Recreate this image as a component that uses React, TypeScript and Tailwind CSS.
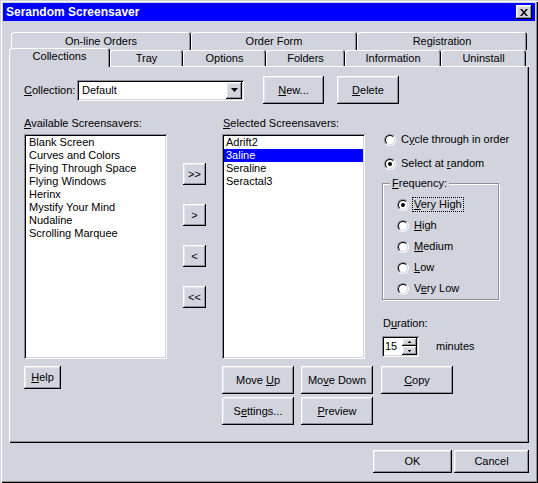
import React from "react"

const raised =
  "bg-[#d1d4dc] shadow-[inset_-1px_-1px_#000,inset_1px_1px_#fff,inset_-2px_-2px_#8e9199,inset_2px_2px_#e3e5ea]"
const sunken =
  "shadow-[inset_1px_1px_#8e9199,inset_-1px_-1px_#fff,inset_2px_2px_#000,inset_-2px_-2px_#d1d4dc]"

function Btn({ children, className = "" }: { children: React.ReactNode; className?: string }) {
  return (
    <button type="button" className={`flex items-center justify-center ${raised} ${className}`}>
      {children}
    </button>
  )
}

function Tab({ children, className = "" }: { children: React.ReactNode; className?: string }) {
  return (
    <div
      className={`flex items-center justify-center rounded-t-[3px] bg-[#d1d4dc] shadow-[inset_1px_1px_#fff,inset_-1px_0_#000,inset_-2px_0_#8e9199] ${className}`}
    >
      {children}
    </div>
  )
}

function Radio({ checked = false }: { checked?: boolean }) {
  return (
    <span className="relative inline-block w-[12px] h-[12px] shrink-0 rounded-full border border-t-[#8e9199] border-l-[#8e9199] border-b-white border-r-white">
      <span className="absolute inset-0 flex items-center justify-center rounded-full bg-white border border-t-black border-l-black border-b-[#d1d4dc] border-r-[#d1d4dc]">
        {checked && <span className="w-[4px] h-[4px] rounded-full bg-black" />}
      </span>
    </span>
  )
}

function RadioRow({ checked, children }: { checked?: boolean; children: React.ReactNode }) {
  return (
    <div className="flex items-center h-[13px] whitespace-nowrap">
      <Radio checked={checked} />
      <span className="ml-[5px]">{children}</span>
    </div>
  )
}

const available = [
  "Blank Screen",
  "Curves and Colors",
  "Flying Through Space",
  "Flying Windows",
  "Herinx",
  "Mystify Your Mind",
  "Nudaline",
  "Scrolling Marquee",
]
const selected = ["Adrift2", "3aline", "Seraline", "Seractal3"]

export default function App() {
  return (
    <div className="w-[538px] h-[483px] flex flex-col bg-[#d1d4dc] shadow-[inset_1px_1px_#d1d4dc,inset_2px_2px_#fff,inset_-1px_-1px_#000,inset_-2px_-2px_#8e9199] font-['Liberation_Sans',Arial,sans-serif] text-[11px] leading-[13px] text-black">
      {/* title bar */}
      <div className="mx-[3px] mt-[3px] h-[18px] flex items-center justify-between pl-[3px] pr-[3px] bg-[#0000ff]">
        <span className="text-white font-bold text-[12px]">Serandom Screensaver</span>
        <button type="button" className={`w-[16px] h-[14px] flex items-center justify-center ${raised}`}>
          <svg width="8" height="7" viewBox="0 0 8 7">
            <path d="M0 0h2l2 2.5L6 0h2L5 3.5 8 7H6L4 4.5 2 7H0l3-3.5z" fill="#000" />
          </svg>
        </button>
      </div>

      {/* tabs */}
      <div className="mt-[11px] flex pl-[11px]">
        <Tab className="w-[180px] h-[18px]">On-line Orders</Tab>
        <Tab className="w-[166px] h-[18px]">Order Form</Tab>
        <Tab className="w-[170px] h-[18px]">Registration</Tab>
      </div>
      <div className="flex items-end pl-[9px] h-[16px]">
        <div className="relative z-10 -mb-[1px] w-[101px] h-[19px] flex items-center justify-center pb-[2px] rounded-t-[3px] bg-[#d1d4dc] shadow-[inset_1px_1px_#fff,inset_-1px_0_#000,inset_-2px_0_#8e9199]">
          Collections
        </div>
        <Tab className="w-[73px] h-[16px]">Tray</Tab>
        <Tab className="w-[83px] h-[16px]">Options</Tab>
        <Tab className="w-[79px] h-[16px]">Folders</Tab>
        <Tab className="w-[96px] h-[16px]">Information</Tab>
        <Tab className="w-[85px] h-[16px]">Uninstall</Tab>
      </div>

      {/* panel */}
      <div className="ml-[9px] w-[520px] h-[377px] shadow-[inset_1px_1px_#fff,inset_-1px_-1px_#000,inset_-2px_-2px_#8e9199]">
        <div className="mt-[10px] pl-[15px] flex items-center h-[28px]">
          <span className="w-[53px]">
            <u>C</u>ollection:
          </span>
          <div className={`w-[167px] h-[21px] bg-white flex items-center justify-between pl-[5px] pr-[2px] ${sunken}`}>
            <span>Default</span>
            <div className={`w-[16px] h-[17px] flex items-center justify-center ${raised}`}>
              <svg width="7" height="4" viewBox="0 0 7 4">
                <path d="M0 0h7L3.5 4z" fill="#000" />
              </svg>
            </div>
          </div>
          <Btn className="ml-[19px] w-[61px] h-[28px]">
            <span>
              <u>N</u>ew...
            </span>
          </Btn>
          <Btn className="ml-[13px] w-[62px] h-[28px]">
            <span>
              <u>D</u>elete
            </span>
          </Btn>
        </div>

        <div className="mt-[13px] pl-[15px] flex">
          {/* available */}
          <div className="w-[143px] flex flex-col">
            <div className="h-[13px] mb-[4px] whitespace-nowrap">
              <u>A</u>vailable Screensavers:
            </div>
            <div className={`h-[225px] bg-white p-[2px] ${sunken}`}>
              {available.map((s) => (
                <div key={s} className="h-[13px] px-[3px] whitespace-nowrap">
                  {s}
                </div>
              ))}
            </div>
            <Btn className="mt-[7px] w-[37px] h-[23px]">
              <span>
                <u>H</u>elp
              </span>
            </Btn>
          </div>

          {/* arrows */}
          <div className="ml-[16px] w-[23px] pt-[46px] flex flex-col gap-[19px]">
            <Btn className="w-[23px] h-[22px]">&gt;&gt;</Btn>
            <Btn className="w-[23px] h-[22px]">&gt;</Btn>
            <Btn className="w-[23px] h-[22px]">&lt;</Btn>
            <Btn className="w-[23px] h-[22px]">&lt;&lt;</Btn>
          </div>

          {/* selected */}
          <div className="ml-[16px] w-[151px] flex flex-col">
            <div className="h-[13px] mb-[4px] pl-[1px] whitespace-nowrap">
              <u>S</u>elected Screensavers:
            </div>
            <div className={`w-[143px] h-[225px] bg-white p-[2px] ${sunken}`}>
              {selected.map((s) => (
                <div
                  key={s}
                  className={`h-[13px] px-[2px] whitespace-nowrap ${s === "3aline" ? "bg-[#0000ff] text-white" : ""}`}
                >
                  {s}
                </div>
              ))}
            </div>
            <div className="mt-[7px] grid grid-cols-[72px_72px] gap-x-[7px] gap-y-[3px]">
              <Btn className="h-[28px]">
                <span>
                  Move <u>U</u>p
                </span>
              </Btn>
              <Btn className="h-[28px]">
                <span>
                  Mo<u>v</u>e Down
                </span>
              </Btn>
              <Btn className="h-[28px]">
                <span>
                  S<u>e</u>ttings...
                </span>
              </Btn>
              <Btn className="h-[28px]">
                <span>
                  <u>P</u>review
                </span>
              </Btn>
            </div>
          </div>

          {/* options */}
          <div className="ml-[8px] w-[118px] flex flex-col">
            <div className="mt-[16px] pl-[3px]">
              <RadioRow>
                C<u>y</u>cle through in order
              </RadioRow>
            </div>
            <div className="mt-[11px] pl-[3px]">
              <RadioRow checked>
                Select at <u>r</u>andom
              </RadioRow>
            </div>
            <div className="relative mt-[13px] ml-[1px] w-[117px] h-[117px] border border-[#8e9199] shadow-[inset_1px_1px_#fff,1px_1px_#fff] pl-[14px] pt-[14px] flex flex-col gap-[8px]">
              <span className="absolute -top-[7px] left-[7px] px-[2px] bg-[#d1d4dc]">
                <u>F</u>requency:
              </span>
              <div className="flex items-center h-[13px]">
                <Radio checked />
                <span className="ml-[3px] px-[1px] border border-dotted border-black leading-[13px]">
                  <u>V</u>ery High
                </span>
              </div>
              <RadioRow>
                <u>H</u>igh
              </RadioRow>
              <RadioRow>
                <u>M</u>edium
              </RadioRow>
              <RadioRow>
                <u>L</u>ow
              </RadioRow>
              <RadioRow>
                V<u>e</u>ry Low
              </RadioRow>
            </div>
            <div className="mt-[17px] h-[13px] pl-[2px]">
              D<u>u</u>ration:
            </div>
            <div className="mt-[6px] flex items-center">
              <div className={`ml-[1px] w-[37px] h-[21px] bg-white flex items-center justify-between pl-[3px] pr-[2px] ${sunken}`}>
                <span>15</span>
                <div className="flex flex-col">
                  <div className={`w-[15px] h-[8px] flex items-center justify-center ${raised}`}>
                    <svg width="3" height="2" viewBox="0 0 3 2">
                      <path d="M1 0h1v1h1v1H0V1h1z" fill="#000" />
                    </svg>
                  </div>
                  <div className={`w-[15px] h-[9px] flex items-center justify-center ${raised}`}>
                    <svg width="3" height="2" viewBox="0 0 3 2">
                      <path d="M0 0h3v1H2v1H1V1H0z" fill="#000" />
                    </svg>
                  </div>
                </div>
              </div>
              <span className="ml-[17px]">minutes</span>
            </div>
            <Btn className="mt-[9px] w-[72px] h-[28px]">
              <span>
                <u>C</u>opy
              </span>
            </Btn>
          </div>
        </div>
      </div>

      {/* dialog buttons */}
      <div className="mt-[7px] flex justify-end pr-[9px] gap-[2px]">
        <Btn className="w-[79px] h-[23px]">OK</Btn>
        <Btn className="w-[75px] h-[23px]">Cancel</Btn>
      </div>
    </div>
  )
}
